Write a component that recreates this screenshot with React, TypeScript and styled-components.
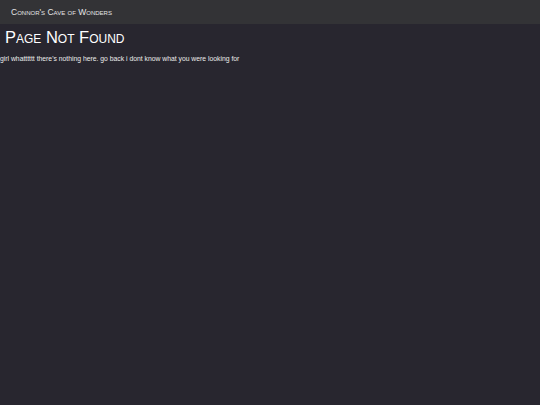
import React from "react";
import styled, { createGlobalStyle } from "styled-components";

const Global = createGlobalStyle`
  html, body { margin: 0; padding: 0; background: #28262f; }
  body { font-family: "Liberation Sans", Arial, sans-serif; color: #ffffff; }
`;

const Page = styled.div`
  min-height: 405px;
  background: #28262f;
  display: flex;
  flex-direction: column;
`;

const Header = styled.header`
  height: 24px;
  background: #333336;
  display: flex;
  align-items: center;
  padding-left: 11px;
`;

const Brand = styled.span`
  font-variant: small-caps;
  font-size: 8.5px;
  color: #e6e6e6;
  line-height: 1;
  margin-top: 1px;
`;

const Main = styled.main`
  display: flex;
  flex-direction: column;
`;

const Title = styled.h1`
  margin: 3px 0 0 5px;
  font-variant: small-caps;
  font-weight: normal;
  font-size: 16.5px;
  line-height: 20px;
  color: #ffffff;
`;

const Text = styled.p`
  margin: 7px 0 0 0;
  font-size: 6.8px;
  line-height: 9px;
  color: #ececec;
`;

export default function App() {
  return (
    <Page>
      <Global />
      <Header>
        <Brand>Connor's Cave of Wonders</Brand>
      </Header>
      <Main>
        <Title>Page Not Found</Title>
        <Text>girl whatttttt there's nothing here. go back i dont know what you were looking for</Text>
      </Main>
    </Page>
  );
}
